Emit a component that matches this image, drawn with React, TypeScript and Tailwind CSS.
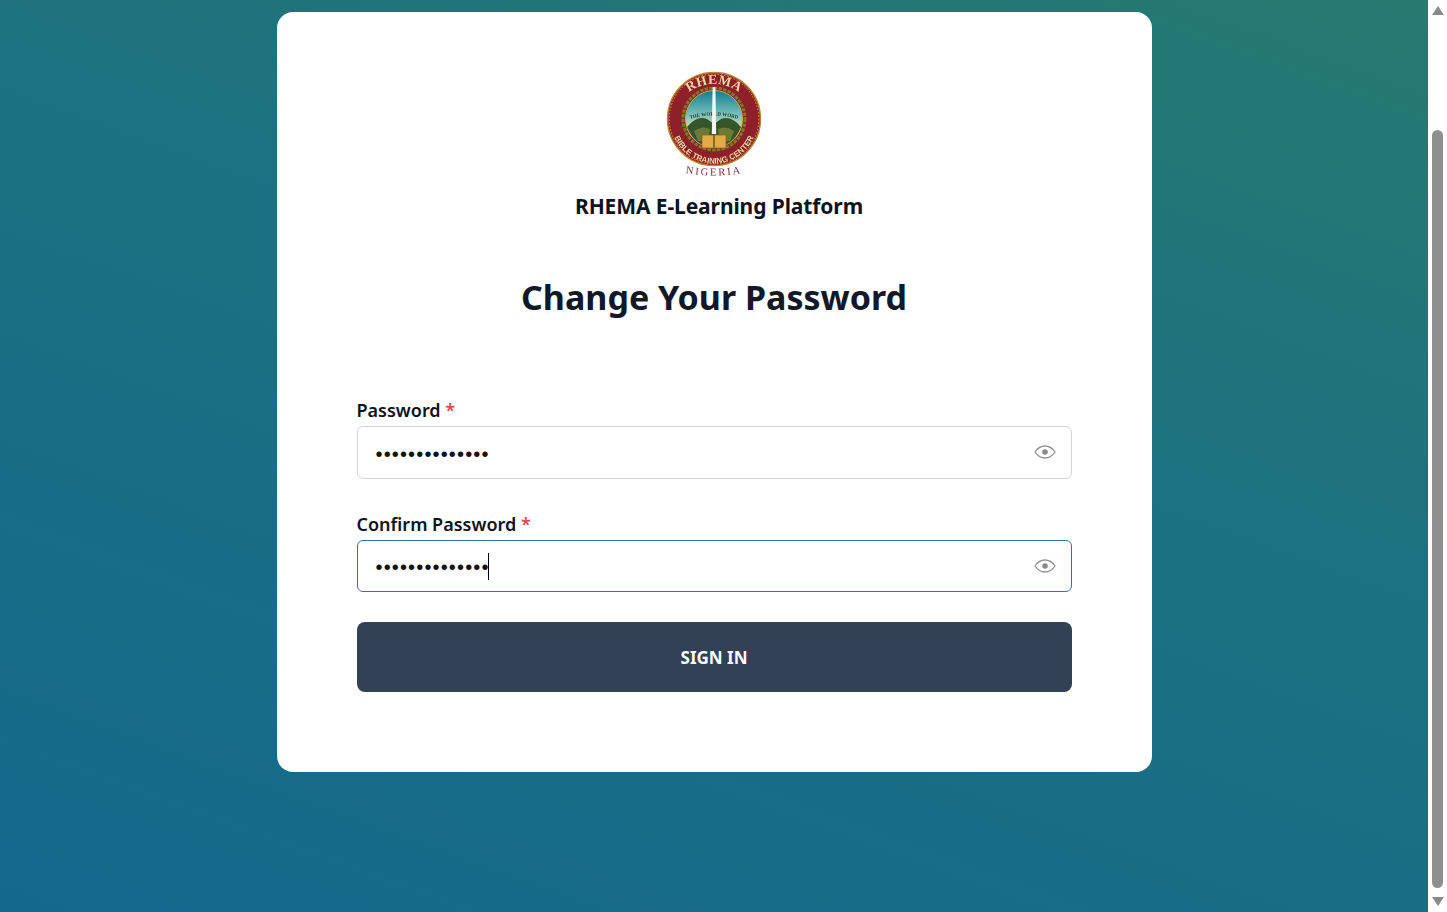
const font = { fontFamily: '"Noto Sans", "Open Sans", sans-serif' };

function Eye() {
  return (
    <svg width="22" height="14" viewBox="0 0 22 14" fill="none" className="shrink-0 -mt-[1px]">
      <path d="M1 7C3.6 3 7 1 11 1s7.4 2 10 6c-2.600 4-6 6-10 6S3.600 11 1 7Z" stroke="#929292" strokeWidth="1.300" />
      <circle cx="11" cy="7" r="2.800" fill="#8a8a8a" />
    </svg>
  );
}

function Logo() {
  return (
    <svg width="100" height="112" viewBox="0 0 100 112" className="block blur-[0.3px]">
      <defs>
        <linearGradient id="sky" x1="0" y1="0" x2="0" y2="1">
          <stop offset="0" stopColor="#0f7d94" />
          <stop offset="0.45" stopColor="#7fc4bd" />
          <stop offset="0.7" stopColor="#e6e3ae" />
          <stop offset="1" stopColor="#d9c98a" />
        </linearGradient>
        <path id="arcTop" d="M10 52a40 38 0 0 1 80 0" />
        <path id="arcBottom" d="M6.500 49a43.500 44.500 0 0 0 87 0" />
        <path id="arcSmall" d="M18 52q32-13 64 0" />
        <path id="arcNigeria" d="M12 101q38 9 76 0" />
      </defs>
      <circle cx="50" cy="49" r="46.500" fill="#8f2029" stroke="#b8862f" strokeWidth="1.400" />
      <circle cx="50" cy="49" r="44.800" fill="none" stroke="#d9a441" strokeWidth="1" strokeDasharray="1.500 1.800" />
      <circle cx="50" cy="49" r="31" fill="none" stroke="#7a7a2a" strokeWidth="3" strokeDasharray="3.500 1.200" />
      <circle cx="50" cy="49" r="28.500" fill="url(#sky)" stroke="#c8a94c" strokeWidth="1" />
      <text fontFamily="Liberation Serif, serif" fontSize="13.500" fontWeight="700" fill="#ecd9a4" letterSpacing="0.400">
        <textPath href="#arcTop" startOffset="50%" textAnchor="middle">RHEMA</textPath>
      </text>
      <text fontFamily="Liberation Sans, sans-serif" fontSize="8" fontWeight="700" fill="#ecd9a4">
        <textPath href="#arcBottom" startOffset="50%" textAnchor="middle">BIBLE TRAINING CENTER</textPath>
      </text>
      <path d="M23 57q10-12 20-8l7 5 7-5q10-4 20 8q-8 20-27 20T23 57Z" fill="#34562a" />
      <path d="M30 61q8-6 16-2l-2 12h-10ZM70 61q-8-6-16-2l2 12h10Z" fill="#6d7a35" />
      <text fontFamily="Liberation Serif, serif" fontSize="5" fontWeight="700" fill="#2a3a1e">
        <textPath href="#arcSmall" startOffset="50%" textAnchor="middle">THE WORLD WORD</textPath>
      </text>
      <path d="M48.600 17h2.800l.8 47h-4.400Z" fill="#f5f7f5" />
      <path d="M38 65h11.500v13H38ZM50.500 65H62v13H50.500Z" fill="#e3ab45" stroke="#8a5b1f" strokeWidth="0.700" />
      <text fontFamily="Liberation Serif, serif" fontSize="10.500" fill="#7c2c43" letterSpacing="2">
        <textPath href="#arcNigeria" startOffset="50%" textAnchor="middle">NIGERIA</textPath>
      </text>
    </svg>
  );
}

function Field({ label, focused, mt }: { label: string; focused?: boolean; mt: string }) {
  return (
    <div className={mt}>
      <label className="block text-[18px] leading-[22px] font-semibold text-[#0b1220]">
        {label} <span className="text-[#e5484d]">*</span>
      </label>
      <div
        className={
          focused
            ? "mt-[5px] h-[52px] flex items-center justify-between bg-white border border-[#2a7a9c] rounded-md pl-[18px] pr-[15px]"
            : "mt-[5px] h-[53px] flex items-center justify-between bg-white border border-[#d4d4d8] rounded-md pl-[18px] pr-[15px]"
        }
      >
        <div className="flex items-center h-full">
          <span className="text-[#111] text-[20px] tracking-[1.150px] leading-none pt-[2px] font-['Liberation_Sans',sans-serif]">••••••••••••••</span>
          {focused ? <span className="w-px h-[27px] bg-black mt-[1px] -ml-[2px]" /> : null}
        </div>
        <Eye />
      </div>
    </div>
  );
}

export default function App() {
  return (
    <div className="h-[912px] w-full flex overflow-hidden bg-[linear-gradient(20deg,#14688c_0%,#1c7280_60%,#277a6f_100%)]" style={font}>
      <main className="flex-1 flex flex-col items-center pt-[12px]">
        <div className="w-[875px] h-[760px] bg-white rounded-2xl px-[80px] pt-[58px]">
          <div className="flex justify-center">
            <Logo />
          </div>
          <p className="text-center pl-[10px] mt-[10px] text-[21px] leading-[28px] font-bold text-[#0b1220] tracking-[-0.1px]">RHEMA E-Learning Platform</p>
          <h1 className="text-center mt-[54px] text-[34px] leading-[46px] font-bold text-[#111827]">Change Your Password</h1>
          <Field label="Password" mt="mt-[79px]" />
          <Field label="Confirm Password" mt="mt-[34px]" focused />
          <button className="mt-[30px] w-full h-[70px] pt-[1px] rounded-lg bg-[#334155] text-white font-bold text-[17px]">SIGN IN</button>
        </div>
      </main>
      <div className="w-[19px] bg-white flex flex-col items-center">
        <div className="mt-[6px] w-0 h-0 border-x-[6px] border-x-transparent border-b-[9px] border-b-[#8a8a8a]" />
        <div className="mt-[115px] w-[11px] h-[758px] rounded-md bg-[#8f8f8f]" />
        <div className="mt-[9px] w-0 h-0 border-x-[6px] border-x-transparent border-t-[9px] border-t-[#8a8a8a]" />
      </div>
    </div>
  );
}
